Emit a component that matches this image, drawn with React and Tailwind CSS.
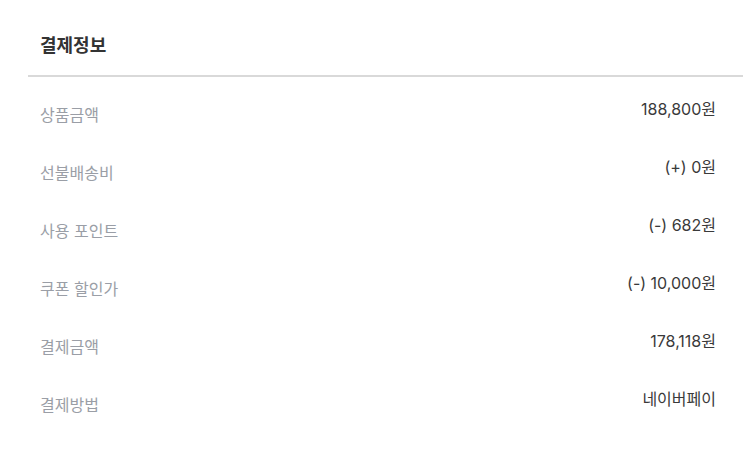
import React from "react";

const rows = [
  ["상품금액", "188,800원"],
  ["선불배송비", "(+) 0원"],
  ["사용 포인트", "(-) 682원"],
  ["쿠폰 할인가", "(-) 10,000원"],
  ["결제금액", "178,118원"],
  ["결제방법", "네이버페이"],
];

export default function App() {
  return (
    <div
      className="w-[743px] h-[456px] bg-white pl-[28px]"
      style={{ fontFamily: "Inter, 'Noto Sans CJK KR', sans-serif" }}
    >
      <div className="pl-3 pt-[34px] pb-[18px] text-[18px] font-bold text-[#333333] leading-[23px]">
        결제정보
      </div>
      <div className="h-[2px] bg-[#d9d9d9]" />
      <div className="pl-3 pr-[27px] pt-[24px]">
        {rows.map(([label, value]) => (
          <div key={label} className="flex justify-between items-start h-[58px]">
            <span className="text-[16px] leading-[20px] text-[#9a9ea6] mt-[4px]">{label}</span>
            <span className="text-[16px] leading-[20px] text-[#3a3a3a] -mt-[2px]">{value}</span>
          </div>
        ))}
      </div>
    </div>
  );
}
